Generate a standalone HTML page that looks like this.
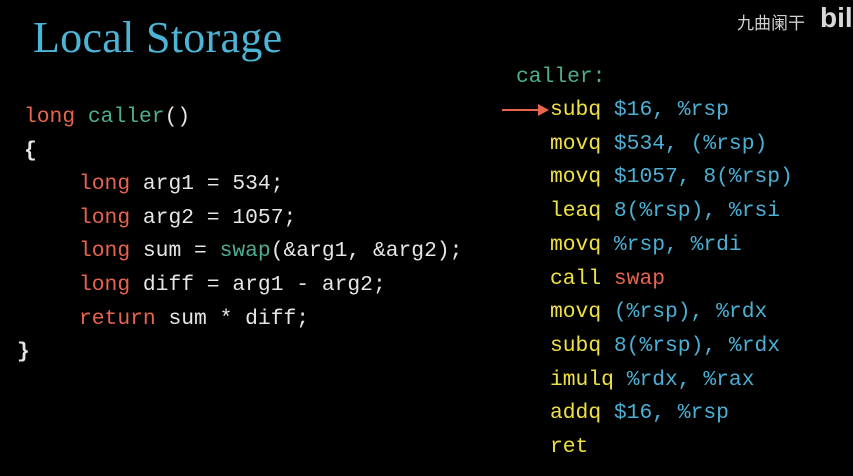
<!DOCTYPE html>
<html><head><meta charset="utf-8"><style>
body{margin:0;width:853px;height:476px;background:#000;overflow:hidden;position:relative;font-family:"Liberation Mono",monospace;}
.t{position:absolute;left:33px;top:12px;font-family:"Liberation Serif",serif;font-size:44px;color:#4cb4d6;letter-spacing:0.3px;white-space:nowrap}
.c{position:absolute;font-size:21.3px;line-height:33.7px;white-space:pre;color:#e6e6e6}
.r{color:#e8644f}.g{color:#4fae92}.y{color:#efe142}.b{color:#4cb0d4}
.wm{position:absolute;left:737px;top:9px;font-family:"Liberation Sans","Noto Sans CJK SC",sans-serif;font-size:17px;color:#cfcfcf;white-space:nowrap}
</style></head><body>
<div class="t">Local Storage</div>
<div class="wm">九曲阑干</div>
<div style="position:absolute;left:820px;top:2px;font-family:'Liberation Sans',sans-serif;font-weight:bold;font-size:28px;color:#d8d8d8">bili</div>
<div class="c" style="left:24px;top:101px"><span class="r">long</span> <span class="g">caller</span>()
<b>{</b></div>
<div class="c" style="left:79px;top:168px"><span class="r">long</span> arg1 = 534;
<span class="r">long</span> arg2 = 1057;
<span class="r">long</span> sum = <span class="g">swap</span>(&amp;arg1, &amp;arg2);
<span class="r">long</span> diff = arg1 - arg2;
<span class="r">return</span> sum * diff;</div>
<div class="c" style="left:17px;top:336px"><b>}</b></div>
<div class="c g" style="left:516px;top:61px">caller:</div>
<svg style="position:absolute;left:500px;top:103px" width="52" height="14"><line x1="2" y1="7" x2="42" y2="7" stroke="#e8644f" stroke-width="2"/><polygon points="38,1 49,7 38,13" fill="#e8644f"/></svg>
<div class="c" style="left:550px;top:94px"><span class="y">subq</span> <span class="b">$16, %rsp</span>
<span class="y">movq</span> <span class="b">$534, (%rsp)</span>
<span class="y">movq</span> <span class="b">$1057, 8(%rsp)</span>
<span class="y">leaq</span> <span class="b">8(%rsp), %rsi</span>
<span class="y">movq</span> <span class="b">%rsp, %rdi</span>
<span class="y">call</span> <span class="r">swap</span>
<span class="y">movq</span> <span class="b">(%rsp), %rdx</span>
<span class="y">subq</span> <span class="b">8(%rsp), %rdx</span>
<span class="y">imulq</span> <span class="b">%rdx, %rax</span>
<span class="y">addq</span> <span class="b">$16, %rsp</span>
<span class="y">ret</span></div>
</body></html>
